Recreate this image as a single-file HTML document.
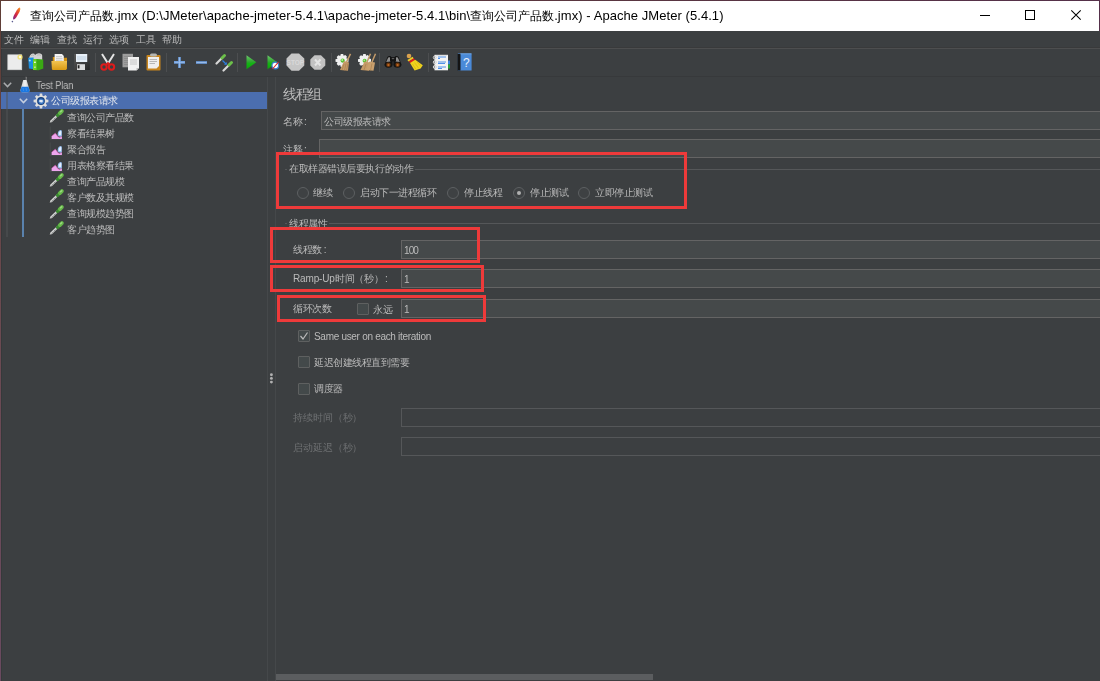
<!DOCTYPE html>
<html><head><meta charset="utf-8">
<style>
*{margin:0;padding:0;box-sizing:border-box}
html,body{width:1100px;height:681px;overflow:hidden;background:#3c3f41;font-family:"Liberation Sans",sans-serif}
.a{position:absolute}
.t{position:absolute;white-space:nowrap;color:#bbbbbb;font-size:10px;line-height:12px;letter-spacing:-0.45px;will-change:transform}
.fld{position:absolute;background:#45494a;border:1px solid #646464}
.red{position:absolute;border:3px solid #ee3a3a}
.line{position:absolute;height:1px;background:#555759}
.rad{position:absolute;width:12px;height:12px;border-radius:50%;border:1px solid #5d6062;background:#3e4143}
.chk{position:absolute;width:12px;height:12px;border:1px solid #5e6060;background:#43494a;border-radius:1px}
svg{position:absolute;overflow:visible}
.L{font-size:13px;letter-spacing:0.06px}
</style></head><body>
<!-- window border -->
<div class="a" style="left:0;top:0;width:1px;height:681px;background:linear-gradient(180deg,#5f3d35,#6b4a50 45%,#6a4a60);z-index:50"></div>
<div class="a" style="left:1px;top:31px;width:1px;height:650px;background:#36393b"></div>
<div class="a" style="left:0;top:0;width:1100px;height:1px;background:linear-gradient(90deg,#5f3d35,#55304a);z-index:50"></div>
<div class="a" style="left:1099px;top:0;width:1px;height:31px;background:#55304a;z-index:50"></div>
<!-- title bar -->
<div class="a" style="left:0;top:0;width:1100px;height:31px;background:#fff"></div>
<div class="t" id="title" style="left:30px;top:8.5px;font-size:12px;line-height:14px;color:#000;letter-spacing:0">查询公司产品数<span class="L">.jmx (D:\JMeter\apache-jmeter-5.4.1\apache-jmeter-5.4.1\bin\</span>查询公司产品数<span class="L">.jmx) - Apache JMeter (5.4.1)</span></div>
<svg style="left:9px;top:6px" width="14" height="18" viewBox="0 0 14 18">
 <defs><linearGradient id="fth" x1="1" y1="0" x2="0" y2="1"><stop offset="0" stop-color="#f7a12a"/><stop offset="0.3" stop-color="#ea5a2a"/><stop offset="0.6" stop-color="#d42545"/><stop offset="1" stop-color="#6e2a90"/></linearGradient></defs>
 <path d="M10.9 1.5 Q12 2.5 10.6 5.8 L7.2 11.6 Q5.6 13.8 4.3 13.4 Q3.6 12.6 4.6 10 L7.8 4.2 Q9.6 1.2 10.9 1.5 Z" fill="url(#fth)"/>
 <circle cx="3.4" cy="15.6" r="0.8" fill="#5b5b8f"/>
</svg>
<!-- window controls -->
<div class="a" style="left:980px;top:15px;width:10px;height:1px;background:#000"></div>
<div class="a" style="left:1025px;top:10px;width:10px;height:10px;border:1px solid #000"></div>
<svg style="left:1071px;top:10px" width="10" height="10" viewBox="0 0 10 10"><path d="M0.3 0.3 L9.7 9.7 M9.7 0.3 L0.3 9.7" stroke="#000" stroke-width="1.05"/></svg>

<!-- menu -->
<div class="t" style="left:4px;top:34px">文件</div>
<div class="t" style="left:30px;top:34px">编辑</div>
<div class="t" style="left:57px;top:34px">查找</div>
<div class="t" style="left:83px;top:34px">运行</div>
<div class="t" style="left:109px;top:34px">选项</div>
<div class="t" style="left:136px;top:34px">工具</div>
<div class="t" style="left:162px;top:34px">帮助</div>
<div class="line" style="left:1px;top:47px;width:1099px;background:#393a3b"></div><div class="line" style="left:1px;top:48px;width:1099px;background:#4d4e4f"></div>

<!-- toolbar -->
<!-- toolbar icons -->
<svg style="left:7px;top:54px" width="16" height="17" viewBox="0 0 16 17">
 <rect x="0.8" y="0.8" width="14" height="15" fill="#ececec" stroke="#d8d8d8" stroke-width="0.6"/>
 <circle cx="13" cy="3" r="2.6" fill="#f3e06a" opacity="0.9"/><circle cx="13" cy="3" r="1.2" fill="#fffbe0"/>
</svg>
<svg style="left:28px;top:53px" width="17" height="18" viewBox="0 0 17 18">
 <path d="M1 6 Q1.5 1.2 4.8 0.6 Q6.4 0.4 7 2 Q9 -0.2 12.2 0.4 Q14.2 0.8 14.2 2.5 L14.2 8 L1 8 Z" fill="#d4d4d4"/>
 <path d="M3 2.5 Q4.5 1.6 6 2.6 M9 2.2 Q11 1.2 13 2.4" stroke="#a8a8a8" stroke-width="0.6" fill="none"/>
 <path d="M0.2 4.8 L5.6 4.4 L6 16.2 L0.9 15.6 Z" fill="#1b8ee0"/>
 <circle cx="1.8" cy="7.6" r="1" fill="#c8ecff" opacity="0.8"/>
 <path d="M5 6.2 Q10 5.8 15.2 6.4 L15.3 15.4 L10.5 17.2 L5 17 Z" fill="#3aa814"/>
 <path d="M5 6.2 L8.4 6.1 L8.6 17.1 L5 17 Z" fill="#6ad224"/>
 <rect x="6" y="8.6" width="1.8" height="1.4" fill="#e8f8d8"/><rect x="6" y="13.6" width="1.8" height="1.2" fill="#c8eea8"/>
</svg>
<svg style="left:51px;top:53px" width="17" height="18" viewBox="0 0 17 18">
 <defs><linearGradient id="fo" x1="0" y1="0" x2="0" y2="1"><stop offset="0" stop-color="#f2c452"/><stop offset="1" stop-color="#d99a14"/></linearGradient></defs>
 <path d="M1.8 4 H6 L6.5 4.8 H16 V16 H1.8 Z" fill="#cf8f12"/>
 <path d="M3.6 1 H11 L12.8 3 V9 H3.6 Z" fill="#f4f4f4"/>
 <path d="M5 3.6 H11 M5 5.4 H11.5 M5 7.2 H11.5" stroke="#b8b8b8" stroke-width="0.7"/>
 <path d="M0.4 8 H15.8 Q16.2 8 16 9 L15.6 16.2 Q15.4 17 14.6 17 H2 Q1 17 0.9 16 Z" fill="url(#fo)"/>
</svg>
<svg style="left:74px;top:53px" width="16" height="18" viewBox="0 0 16 18">
 <defs><linearGradient id="sv" x1="0" y1="0" x2="1" y2="1"><stop offset="0" stop-color="#5a5a5a"/><stop offset="1" stop-color="#262626"/></linearGradient></defs>
 <path d="M0.2 1 H15.8 V17 H0.2 Z" fill="url(#sv)"/>
 <rect x="2" y="1" width="11.2" height="8" fill="#e8f0f8"/>
 <path d="M3 4 H12.4 M3 6 H12.4" stroke="#a9c0d6" stroke-width="0.7"/>
 <rect x="3" y="11.2" width="8" height="5.8" fill="#dcdcdc"/>
 <rect x="3.7" y="12.2" width="1.8" height="3.2" fill="#202020"/>
</svg>
<div class="a" style="left:95px;top:53px;width:1px;height:19px;background:#4c4e50"></div>
<svg style="left:100px;top:53px" width="16" height="18" viewBox="0 0 16 18">
 <path d="M2 1 L8 10.5 M14 1 L8 10.5" stroke="#e4e4e4" stroke-width="2"/>
 <circle cx="4" cy="14" r="2.7" fill="none" stroke="#e01b1b" stroke-width="2"/>
 <circle cx="11.5" cy="14" r="2.7" fill="none" stroke="#e01b1b" stroke-width="2"/>
 <path d="M6 12 L8 10 L10 12" stroke="#e01b1b" stroke-width="1.8" fill="none"/>
</svg>
<svg style="left:122px;top:53px" width="18" height="18" viewBox="0 0 18 18">
 <rect x="0.5" y="0.8" width="10.5" height="13.5" fill="#9d9d9d"/>
 <path d="M2 3.5 H9 M2 5.5 H9 M2 7.5 H9 M2 9.5 H9 M2 11.5 H9" stroke="#878787" stroke-width="0.7"/>
 <path d="M6 4 L17 4 L17 15 L14.5 17.5 L6 17.5 Z" fill="#f1f1f1"/>
 <path d="M8 7 H15 M8 9 H15 M8 11 H15" stroke="#bdbdbd" stroke-width="0.8"/>
 <path d="M14.5 17.5 L14.5 15 L17 15 Z" fill="#bdbdbd"/>
</svg>
<svg style="left:146px;top:53px" width="15" height="18" viewBox="0 0 15 18">
 <rect x="0.5" y="2" width="14" height="15.5" rx="1" fill="#c7851e"/>
 <path d="M2 4 L13 4 L13 13 L10.5 15.5 L2 15.5 Z" fill="#efefef"/>
 <path d="M3.5 6.5 H11 M3.5 8.5 H11 M3.5 10.5 H9" stroke="#a8a8a8" stroke-width="0.8"/>
 <rect x="4" y="0.5" width="7" height="3" rx="1.5" fill="#b5b5b0"/>
</svg>
<div class="a" style="left:166px;top:53px;width:1px;height:19px;background:#4c4e50"></div>
<svg style="left:173px;top:56px" width="13" height="13" viewBox="0 0 13 13">
 <path d="M6.5 1 V12 M1 6.3 H12" stroke="#6a9ad8" stroke-width="2.7"/>
 <path d="M6.5 1.5 V11.5 M1.5 6.3 H11.5" stroke="#a3c3ee" stroke-width="0.8"/>
</svg>
<svg style="left:195px;top:60px" width="13" height="5" viewBox="0 0 13 5">
 <path d="M1 2.5 H12" stroke="#6a9ad8" stroke-width="2.7"/>
 <path d="M1.5 2.5 H11.5" stroke="#a3c3ee" stroke-width="0.8"/>
</svg>
<svg style="left:215px;top:53px" width="19" height="19" viewBox="0 0 19 19">
 <path d="M1.5 10.5 L7 5" stroke="#d8d8d8" stroke-width="2.2" stroke-linecap="round"/>
 <path d="M7 5 L9.5 2.5" stroke="#6cbf4a" stroke-width="3" stroke-linecap="round"/>
 <path d="M8.5 17.5 L14 12" stroke="#d8d8d8" stroke-width="2.2" stroke-linecap="round"/>
 <path d="M14 12 L16.5 9.5" stroke="#6cbf4a" stroke-width="3" stroke-linecap="round"/>
 <path d="M7.5 7.5 L11 11" stroke="#2e7fe0" stroke-width="1.2"/>
 <path d="M9 11.8 L11.8 11.8 L11.8 9 Z" fill="#2e7fe0"/>
</svg>
<div class="a" style="left:237px;top:53px;width:1px;height:19px;background:#4c4e50"></div>
<svg style="left:246px;top:55px" width="11" height="15" viewBox="0 0 11 15">
 <defs><linearGradient id="gp" x1="0" y1="0" x2="0" y2="1"><stop offset="0" stop-color="#6cc86c"/><stop offset="0.5" stop-color="#2aa52a"/><stop offset="0.55" stop-color="#12b812"/><stop offset="1" stop-color="#0fa00f"/></linearGradient></defs>
 <path d="M0.5 0.3 L10.3 7.2 L0.5 14.3 Z" fill="url(#gp)"/>
</svg>
<svg style="left:267px;top:55px" width="13" height="16" viewBox="0 0 13 16">
 <path d="M0.5 0.3 L10.3 7.2 L0.5 14.3 Z" fill="url(#gp)"/>
 <circle cx="8.3" cy="10.5" r="3.3" fill="#ffffff" stroke="#3b7fd0" stroke-width="1.2"/>
 <path d="M5.5 14 L11.5 7" stroke="#e02020" stroke-width="1.1"/>
</svg>
<svg style="left:286px;top:53px" width="19" height="18" viewBox="0 0 19 18">
 <path d="M5.5 0.5 H13 L18.3 5.5 V12.5 L13 17.7 H5.5 L0.5 12.5 V5.5 Z" fill="#c6c6c6"/>
 <text x="9.4" y="11.8" font-size="6.5" font-weight="bold" text-anchor="middle" fill="#d9d9d9" font-family="Liberation Sans">STOP</text>
</svg>
<svg style="left:310px;top:55px" width="16" height="15" viewBox="0 0 16 15">
 <path d="M4.5 0.3 H11 L15.3 4.5 V10.5 L11 14.7 H4.5 L0.3 10.5 V4.5 Z" fill="#c2c2c2"/>
 <path d="M5 4.5 L10.5 10.5 M10.5 4.5 L5 10.5" stroke="#e4e4e4" stroke-width="2"/>
</svg>
<div class="a" style="left:331px;top:53px;width:1px;height:19px;background:#4c4e50"></div>
<svg style="left:335px;top:53px" width="18" height="18" viewBox="0 0 18 18">
 <g transform="translate(7,7.5)"><path d="M-1.2 -6.5 H1.2 L1.6 -4.7 L3.3 -5.5 L5 -3.8 L4.2 -2.2 L6.5 -1.5 V1.2 L4.5 1.8 L5.3 3.6 L3.6 5.3 L1.8 4.5 L1.2 6.5 H-1.2 L-1.8 4.5 L-3.6 5.3 L-5.3 3.6 L-4.5 1.8 L-6.5 1.2 V-1.2 L-4.5 -1.8 L-5.3 -3.6 L-3.6 -5.3 L-1.8 -4.5 Z" fill="#f0f0f0"/></g>
 <circle cx="7.6" cy="7.6" r="2.1" fill="#58c032"/><circle cx="7.2" cy="7" r="0.9" fill="#b8f0a0"/>
 <path d="M15.5 0.8 L11.5 9" stroke="#c39b6a" stroke-width="1.5"/>
 <path d="M9 8 L14 9.5 L13 17.8 L5 17 Z" fill="#c49a68"/>
 <path d="M9 11 L7 17 M11 10.5 L9.5 17.5 M13 10.5 L11.5 17.5" stroke="#a57a48" stroke-width="0.6"/>
</svg>
<svg style="left:358px;top:53px" width="19" height="18" viewBox="0 0 19 18">
 <g transform="translate(6.5,7.5)"><path d="M-1.2 -6.5 H1.2 L1.6 -4.7 L3.3 -5.5 L5 -3.8 L4.2 -2.2 L6.5 -1.5 V1.2 L4.5 1.8 L5.3 3.6 L3.6 5.3 L1.8 4.5 L1.2 6.5 H-1.2 L-1.8 4.5 L-3.6 5.3 L-5.3 3.6 L-4.5 1.8 L-6.5 1.2 V-1.2 L-4.5 -1.8 L-5.3 -3.6 L-3.6 -5.3 L-1.8 -4.5 Z" fill="#f0f0f0"/></g>
 <circle cx="6.6" cy="7.8" r="2" fill="#58c032"/><circle cx="6.2" cy="7.2" r="0.8" fill="#b8f0a0"/>
 <path d="M12.5 0.8 L9 9 M17.5 0.8 L14 9" stroke="#c39b6a" stroke-width="1.5"/>
 <path d="M6.5 8.5 L12 9.5 L11 17.8 L2.5 17 Z" fill="#c49a68"/>
 <path d="M11.5 8.5 L17 9.5 L15.5 17.8 L8 17 Z" fill="#c9a06e"/>
 <path d="M8 11 L6 17 M14 10.5 L12.5 17.5" stroke="#a57a48" stroke-width="0.6"/>
</svg>
<div class="a" style="left:379px;top:53px;width:1px;height:19px;background:#4c4e50"></div>
<svg style="left:384px;top:55px" width="18" height="13" viewBox="0 0 18 13">
 <path d="M0.5 9.6 L3.4 2 Q4.4 0.6 6.4 1 L8.4 3.2 L8.6 9.6 Q8.4 12.8 4.4 12.8 Q0.4 12.6 0.5 9.6 Z" fill="#141414"/>
 <path d="M17.5 9.6 L14.6 2 Q13.6 0.6 11.6 1 L9.6 3.2 L9.4 9.6 Q9.6 12.8 13.6 12.8 Q17.6 12.6 17.5 9.6 Z" fill="#141414"/>
 <path d="M2.2 7 L4.2 2.4 L6 2.2 L6.6 6.4 Z" fill="#8e8e8e"/>
 <path d="M15.8 7 L13.8 2.4 L12 2.2 L11.4 6.4 Z" fill="#8e8e8e"/>
 <path d="M6 2.2 H12 V6.4 H6 Z" fill="#141414"/><rect x="7.8" y="3" width="2.4" height="1.2" fill="#5a5a5a"/>
 <circle cx="4.4" cy="9.8" r="2.2" fill="#6e360a"/><circle cx="13.6" cy="9.8" r="2.2" fill="#6e360a"/>
 <circle cx="4.4" cy="10" r="1.1" fill="#c06a28"/><circle cx="13.6" cy="10" r="1.1" fill="#c06a28"/>
</svg>
<svg style="left:406px;top:53px" width="18" height="18" viewBox="0 0 18 18">
 <circle cx="3" cy="3" r="2.3" fill="#dba24e"/>
 <path d="M1.4 7 L6.6 3.8 L7.8 5.4 L2.6 8.6 Z" fill="#e6cc2a"/>
 <path d="M2.8 8.4 L7.8 5.2 L9.2 7.2 L4.2 10.2 Z" fill="#e01e1a"/>
 <path d="M4 10 L9.2 6.8 L16.8 12.2 L14.6 15.6 L8.6 17.6 Z" fill="#f0d41e"/>
 <path d="M6.5 11 L10 16.4 M8.6 9.6 L12.8 15.4 M10.8 8.8 L15.2 13.6" stroke="#c9a812" stroke-width="0.5"/>
</svg>
<div class="a" style="left:428px;top:53px;width:1px;height:19px;background:#4c4e50"></div>
<svg style="left:433px;top:54px" width="18" height="17" viewBox="0 0 18 17">
 <rect x="1.5" y="0.8" width="13.5" height="15.5" fill="#f4f4f4"/>
 <path d="M3 1.5 H14.5" stroke="#dcdcdc" stroke-width="0.8"/>
 <circle cx="1.8" cy="3.5" r="1.5" fill="none" stroke="#d8d8d8" stroke-width="1"/>
 <circle cx="1.8" cy="8.2" r="1.5" fill="none" stroke="#d8d8d8" stroke-width="1"/>
 <circle cx="1.8" cy="13" r="1.5" fill="none" stroke="#d8d8d8" stroke-width="1"/>
 <path d="M5 3 H13 M5 4.5 H7 M5 8 H13 M5 9.5 H12 M5 13 H13 M5 14.5 H9" stroke="#3d86e6" stroke-width="0.9"/>
 <rect x="15" y="6.5" width="2" height="4" fill="#3a7fdc"/><rect x="15" y="10.5" width="2" height="4" fill="#28a03a"/>
</svg>
<svg style="left:457px;top:53px" width="15" height="18" viewBox="0 0 15 18">
 <rect x="0.8" y="0.5" width="13.8" height="17" rx="0.5" fill="#4a8ad8"/>
 <rect x="0.5" y="1" width="3" height="16.5" fill="#141414"/>
 <path d="M3.5 0.8 H14.5" stroke="#7ab0ec" stroke-width="0.8"/>
 <text x="9.3" y="13.5" font-size="12" text-anchor="middle" fill="#e6eefa" font-family="Liberation Sans">?</text>
</svg>

<div class="line" style="left:1px;top:76px;width:1099px;background:#37393b"></div>

<!-- tree panel -->
<div class="a" style="left:1px;top:92px;width:266px;height:17px;background:#4b6eaf"></div>
<div class="a" style="left:267px;top:77px;width:1px;height:604px;background:#45484a"></div>
<div class="a" style="left:275px;top:77px;width:1px;height:604px;background:#45484a"></div>
<div class="a" style="left:6px;top:92px;width:2px;height:17px;background:#4f6284"></div><div class="a" style="left:6px;top:109px;width:2px;height:128px;background:#46494b"></div>
<div class="a" style="left:22px;top:109px;width:2px;height:128px;background:#5a82ad"></div>
<svg style="left:3px;top:82px" width="9" height="6" viewBox="0 0 9 6"><path d="M0.8 0.8 L4.5 4.6 L8.2 0.8" stroke="#a9abad" stroke-width="1.5" fill="none"/></svg>
<svg style="left:20px;top:77px" width="10" height="16" viewBox="0 0 10 16">
 <defs><linearGradient id="fl" x1="0" y1="0" x2="1" y2="0"><stop offset="0" stop-color="#c8c8c8"/><stop offset="0.5" stop-color="#f2f2f2"/><stop offset="1" stop-color="#bdbdbd"/></linearGradient></defs>
 <path d="M5.6 0.2 L6.4 0.2 L6 3.5" stroke="#8a8a8a" stroke-width="0.9" fill="none"/>
 <path d="M3.2 3 H6.6 L9.6 13.3 Q9.8 15.2 8 15.2 H2 Q0.2 15.2 0.4 13.3 Z" fill="url(#fl)"/>
 <path d="M1.6 9.8 H8.4 L9.6 13.3 Q9.8 15.2 8 15.2 H2 Q0.2 15.2 0.4 13.3 Z" fill="#1b78e2"/>
 <path d="M3 11 L3.5 14 M6 11 L6.5 14" stroke="#4d9cf0" stroke-width="0.6"/>
</svg>
<div class="t" style="left:36px;top:79px;font-size:11px;line-height:12px;letter-spacing:-0.2px;transform:scaleX(0.86);transform-origin:0 0">Test Plan</div>
<svg style="left:19px;top:98px" width="9" height="6" viewBox="0 0 9 6"><path d="M0.8 0.8 L4.5 4.6 L8.2 0.8" stroke="#c5cfe0" stroke-width="1.5" fill="none"/></svg>
<svg style="left:33px;top:93px" width="16" height="16" viewBox="0 0 16 16">
 <path d="M6.61 2.58 L6.77 0.60 L9.23 0.60 L9.39 2.58 L10.85 3.18 L12.36 1.90 L14.10 3.64 L12.82 5.15 L13.42 6.61 L15.40 6.77 L15.40 9.23 L13.42 9.39 L12.82 10.85 L14.10 12.36 L12.36 14.10 L10.85 12.82 L9.39 13.42 L9.23 15.40 L6.77 15.40 L6.61 13.42 L5.15 12.82 L3.64 14.10 L1.90 12.36 L3.18 10.85 L2.58 9.39 L0.60 9.23 L0.60 6.77 L2.58 6.61 L3.18 5.15 L1.90 3.64 L3.64 1.90 L5.15 3.18 Z" fill="#dedede"/>
 <circle cx="8" cy="8" r="3.9" fill="#17407e"/>
 <circle cx="8.2" cy="8.3" r="2.8" fill="#3d78c4"/>
 <path d="M6.2 7.2 Q8 6 10 7.4 L9.6 9.2 Q8 9.8 6.4 9 Z" fill="#dfe9f6"/>
</svg>
<div class="t" style="left:51px;top:95px;color:#e4e8ee">公司级报表请求</div>
<svg style="left:49px;top:109px" width="16" height="16" viewBox="0 0 16 16">
 <path d="M0.3 14.2 L0.9 11.4 L7.6 4.8 L10 7.2 L3.2 13.6 Z" fill="#2c2e2e" opacity="0.7"/>
 <path d="M0.6 13.8 L1.3 11.5 L7.8 5.3 L9.5 7 L3 13.2 Z" fill="#b4b6b6"/>
 <path d="M1.6 12.4 L8 6.3" stroke="#e0e2e2" stroke-width="0.9"/>
 <path d="M3 11.8 L4 10.8 M5 10 L6 9" stroke="#707272" stroke-width="0.6"/>
 <path d="M8.6 6.4 L10.5 4.5" stroke="#3a8a30" stroke-width="3.4" stroke-linecap="round"/>
 <path d="M10.9 4.1 L12.9 2.1" stroke="#66b84a" stroke-width="3.8" stroke-linecap="round"/>
 <path d="M11.6 2.8 L12.8 1.7" stroke="#a0dc84" stroke-width="1.2" stroke-linecap="round"/>
</svg>
<div class="t" style="left:67px;top:112px">查询公司产品数</div>
<svg style="left:49px;top:125px" width="16" height="16" viewBox="0 0 16 16">
 <path d="M1.2 1.5 V14.6 H13.5" stroke="#4a4c4e" stroke-width="0.9" fill="none"/>
 <path d="M2.6 14.1 V11.2 L6.3 8.2 L9.2 11.8 L10.6 12.4 L12.9 11.2 V14.1 Z" fill="#eea6ee"/>
 <path d="M2.6 11.2 L6.3 8.2 L9.2 11.8 L10.6 12.4 L12.9 11.2" stroke="#c85aa8" stroke-width="0.7" fill="none"/>
 <path d="M8.8 10.6 Q8.2 6.6 10.8 5.2 Q12.9 4.3 12.9 6.5 L12.9 10.8 Q11 12.6 8.8 10.6 Z" fill="#9cc2f0"/>
 <path d="M9.8 9.5 Q9.6 7 11.2 6 Q12.2 5.6 12.2 7 L12 9.8 Q11 10.5 9.8 9.5 Z" fill="#e4efff"/>
</svg>
<div class="t" style="left:67px;top:128px">察看结果树</div>
<svg style="left:49px;top:141px" width="16" height="16" viewBox="0 0 16 16">
 <path d="M1.2 1.5 V14.6 H13.5" stroke="#4a4c4e" stroke-width="0.9" fill="none"/>
 <path d="M2.6 14.1 V11.2 L6.3 8.2 L9.2 11.8 L10.6 12.4 L12.9 11.2 V14.1 Z" fill="#eea6ee"/>
 <path d="M2.6 11.2 L6.3 8.2 L9.2 11.8 L10.6 12.4 L12.9 11.2" stroke="#c85aa8" stroke-width="0.7" fill="none"/>
 <path d="M8.8 10.6 Q8.2 6.6 10.8 5.2 Q12.9 4.3 12.9 6.5 L12.9 10.8 Q11 12.6 8.8 10.6 Z" fill="#9cc2f0"/>
 <path d="M9.8 9.5 Q9.6 7 11.2 6 Q12.2 5.6 12.2 7 L12 9.8 Q11 10.5 9.8 9.5 Z" fill="#e4efff"/>
</svg>
<div class="t" style="left:67px;top:144px">聚合报告</div>
<svg style="left:49px;top:157px" width="16" height="16" viewBox="0 0 16 16">
 <path d="M1.2 1.5 V14.6 H13.5" stroke="#4a4c4e" stroke-width="0.9" fill="none"/>
 <path d="M2.6 14.1 V11.2 L6.3 8.2 L9.2 11.8 L10.6 12.4 L12.9 11.2 V14.1 Z" fill="#eea6ee"/>
 <path d="M2.6 11.2 L6.3 8.2 L9.2 11.8 L10.6 12.4 L12.9 11.2" stroke="#c85aa8" stroke-width="0.7" fill="none"/>
 <path d="M8.8 10.6 Q8.2 6.6 10.8 5.2 Q12.9 4.3 12.9 6.5 L12.9 10.8 Q11 12.6 8.8 10.6 Z" fill="#9cc2f0"/>
 <path d="M9.8 9.5 Q9.6 7 11.2 6 Q12.2 5.6 12.2 7 L12 9.8 Q11 10.5 9.8 9.5 Z" fill="#e4efff"/>
</svg>
<div class="t" style="left:67px;top:160px">用表格察看结果</div>
<svg style="left:49px;top:173px" width="16" height="16" viewBox="0 0 16 16">
 <path d="M0.3 14.2 L0.9 11.4 L7.6 4.8 L10 7.2 L3.2 13.6 Z" fill="#2c2e2e" opacity="0.7"/>
 <path d="M0.6 13.8 L1.3 11.5 L7.8 5.3 L9.5 7 L3 13.2 Z" fill="#b4b6b6"/>
 <path d="M1.6 12.4 L8 6.3" stroke="#e0e2e2" stroke-width="0.9"/>
 <path d="M3 11.8 L4 10.8 M5 10 L6 9" stroke="#707272" stroke-width="0.6"/>
 <path d="M8.6 6.4 L10.5 4.5" stroke="#3a8a30" stroke-width="3.4" stroke-linecap="round"/>
 <path d="M10.9 4.1 L12.9 2.1" stroke="#66b84a" stroke-width="3.8" stroke-linecap="round"/>
 <path d="M11.6 2.8 L12.8 1.7" stroke="#a0dc84" stroke-width="1.2" stroke-linecap="round"/>
</svg>
<div class="t" style="left:67px;top:176px">查询产品规模</div>
<svg style="left:49px;top:189px" width="16" height="16" viewBox="0 0 16 16">
 <path d="M0.3 14.2 L0.9 11.4 L7.6 4.8 L10 7.2 L3.2 13.6 Z" fill="#2c2e2e" opacity="0.7"/>
 <path d="M0.6 13.8 L1.3 11.5 L7.8 5.3 L9.5 7 L3 13.2 Z" fill="#b4b6b6"/>
 <path d="M1.6 12.4 L8 6.3" stroke="#e0e2e2" stroke-width="0.9"/>
 <path d="M3 11.8 L4 10.8 M5 10 L6 9" stroke="#707272" stroke-width="0.6"/>
 <path d="M8.6 6.4 L10.5 4.5" stroke="#3a8a30" stroke-width="3.4" stroke-linecap="round"/>
 <path d="M10.9 4.1 L12.9 2.1" stroke="#66b84a" stroke-width="3.8" stroke-linecap="round"/>
 <path d="M11.6 2.8 L12.8 1.7" stroke="#a0dc84" stroke-width="1.2" stroke-linecap="round"/>
</svg>
<div class="t" style="left:67px;top:192px">客户数及其规模</div>
<svg style="left:49px;top:205px" width="16" height="16" viewBox="0 0 16 16">
 <path d="M0.3 14.2 L0.9 11.4 L7.6 4.8 L10 7.2 L3.2 13.6 Z" fill="#2c2e2e" opacity="0.7"/>
 <path d="M0.6 13.8 L1.3 11.5 L7.8 5.3 L9.5 7 L3 13.2 Z" fill="#b4b6b6"/>
 <path d="M1.6 12.4 L8 6.3" stroke="#e0e2e2" stroke-width="0.9"/>
 <path d="M3 11.8 L4 10.8 M5 10 L6 9" stroke="#707272" stroke-width="0.6"/>
 <path d="M8.6 6.4 L10.5 4.5" stroke="#3a8a30" stroke-width="3.4" stroke-linecap="round"/>
 <path d="M10.9 4.1 L12.9 2.1" stroke="#66b84a" stroke-width="3.8" stroke-linecap="round"/>
 <path d="M11.6 2.8 L12.8 1.7" stroke="#a0dc84" stroke-width="1.2" stroke-linecap="round"/>
</svg>
<div class="t" style="left:67px;top:208px">查询规模趋势图</div>
<svg style="left:49px;top:221px" width="16" height="16" viewBox="0 0 16 16">
 <path d="M0.3 14.2 L0.9 11.4 L7.6 4.8 L10 7.2 L3.2 13.6 Z" fill="#2c2e2e" opacity="0.7"/>
 <path d="M0.6 13.8 L1.3 11.5 L7.8 5.3 L9.5 7 L3 13.2 Z" fill="#b4b6b6"/>
 <path d="M1.6 12.4 L8 6.3" stroke="#e0e2e2" stroke-width="0.9"/>
 <path d="M3 11.8 L4 10.8 M5 10 L6 9" stroke="#707272" stroke-width="0.6"/>
 <path d="M8.6 6.4 L10.5 4.5" stroke="#3a8a30" stroke-width="3.4" stroke-linecap="round"/>
 <path d="M10.9 4.1 L12.9 2.1" stroke="#66b84a" stroke-width="3.8" stroke-linecap="round"/>
 <path d="M11.6 2.8 L12.8 1.7" stroke="#a0dc84" stroke-width="1.2" stroke-linecap="round"/>
</svg>
<div class="t" style="left:67px;top:224px">客户趋势图</div>

<!-- right panel -->
<div class="t" style="left:283px;top:86px;font-size:14px;line-height:16px;letter-spacing:-1.4px">线程组</div>
<div class="t" style="left:283px;top:116px">名称<span style="margin-left:2px">:</span></div>
<div class="fld" style="left:321px;top:111px;width:790px;height:19px"></div>
<div class="t" style="left:324px;top:116px">公司级报表请求</div>
<div class="t" style="left:283px;top:144px">注释<span style="margin-left:2px">:</span></div>
<div class="fld" style="left:319px;top:139px;width:790px;height:19px"></div>

<!-- group 1 -->
<div class="line" style="left:285px;top:169px;width:815px"></div>
<div class="t" style="left:287px;top:163px;padding:0 2px;background:#3c3f41">在取样器错误后要执行的动作</div>
<div class="rad" style="left:297px;top:187px"></div><div class="t" style="left:313px;top:187px">继续</div>
<div class="rad" style="left:343px;top:187px"></div><div class="t" style="left:360px;top:187px">启动下一进程循环</div>
<div class="rad" style="left:447px;top:187px"></div><div class="t" style="left:464px;top:187px">停止线程</div>
<div class="rad" style="left:513px;top:187px"></div><div class="a" style="left:517px;top:191px;width:4px;height:4px;border-radius:50%;background:#b0b0b0"></div><div class="t" style="left:530px;top:187px">停止测试</div>
<div class="rad" style="left:578px;top:187px"></div><div class="t" style="left:595px;top:187px">立即停止测试</div>

<!-- group 2 -->
<div class="line" style="left:285px;top:223px;width:815px"></div>
<div class="t" style="left:287px;top:218px;padding:0 2px;background:#3c3f41">线程属性</div>
<div class="t" style="left:293px;top:244px">线程数<span style="margin-left:2px">:</span></div>
<div class="fld" style="left:401px;top:240px;width:710px;height:19px"></div>
<div class="t" style="left:404px;top:245px;letter-spacing:-0.9px">100</div>
<div class="t" style="left:293px;top:273px;letter-spacing:-0.15px">Ramp-Up时间（秒）<span style="margin-left:1px">:</span></div>
<div class="fld" style="left:401px;top:269px;width:710px;height:19px"></div>
<div class="t" style="left:404px;top:274px">1</div>
<div class="t" style="left:293px;top:303px">循环次数</div>
<div class="chk" style="left:357px;top:303px"></div>
<div class="t" style="left:373px;top:304px">永远</div>
<div class="fld" style="left:401px;top:299px;width:710px;height:19px"></div>
<div class="t" style="left:404px;top:304px">1</div>

<div class="chk" style="left:298px;top:330px"></div>
<svg style="left:298px;top:330px" width="12" height="12" viewBox="0 0 12 12"><path d="M2.5 6 L5 9 L9.5 2.5" stroke="#bbb" stroke-width="1.2" fill="none"/></svg>
<div class="t" style="left:314px;top:331px;letter-spacing:-0.3px">Same user on each iteration</div>
<div class="chk" style="left:298px;top:356px"></div>
<div class="t" style="left:314px;top:357px">延迟创建线程直到需要</div>
<div class="chk" style="left:298px;top:383px"></div>
<div class="t" style="left:314px;top:383px">调度器</div>

<div class="t" style="left:293px;top:412px;color:#6e7072;letter-spacing:-0.1px">持续时间（秒）</div>
<div class="fld" style="left:401px;top:408px;width:710px;height:19px;background:#3c3f41;border-color:#555759"></div>
<div class="t" style="left:293px;top:442px;color:#6e7072;letter-spacing:-0.1px">启动延迟（秒）</div>
<div class="fld" style="left:401px;top:437px;width:710px;height:19px;background:#3c3f41;border-color:#555759"></div>

<!-- red boxes -->
<div class="red" style="left:276px;top:152px;width:411px;height:57px"></div>
<div class="red" style="left:270px;top:227px;width:210px;height:36px"></div>
<div class="red" style="left:270px;top:265px;width:214px;height:27px"></div>
<div class="red" style="left:277px;top:295px;width:209px;height:27px"></div>

<!-- divider dots -->
<svg style="left:268px;top:371px" width="8" height="14" viewBox="0 0 8 14"><circle cx="3.4" cy="3.7" r="1.45" fill="#b0b0b0"/><circle cx="3.4" cy="7.4" r="1.45" fill="#b0b0b0"/><circle cx="3.4" cy="11.1" r="1.45" fill="#b0b0b0"/></svg>

<!-- bottom scrollbar -->
<div class="a" style="left:276px;top:674px;width:377px;height:6px;background:#5b5d5f"></div>
</body></html>
